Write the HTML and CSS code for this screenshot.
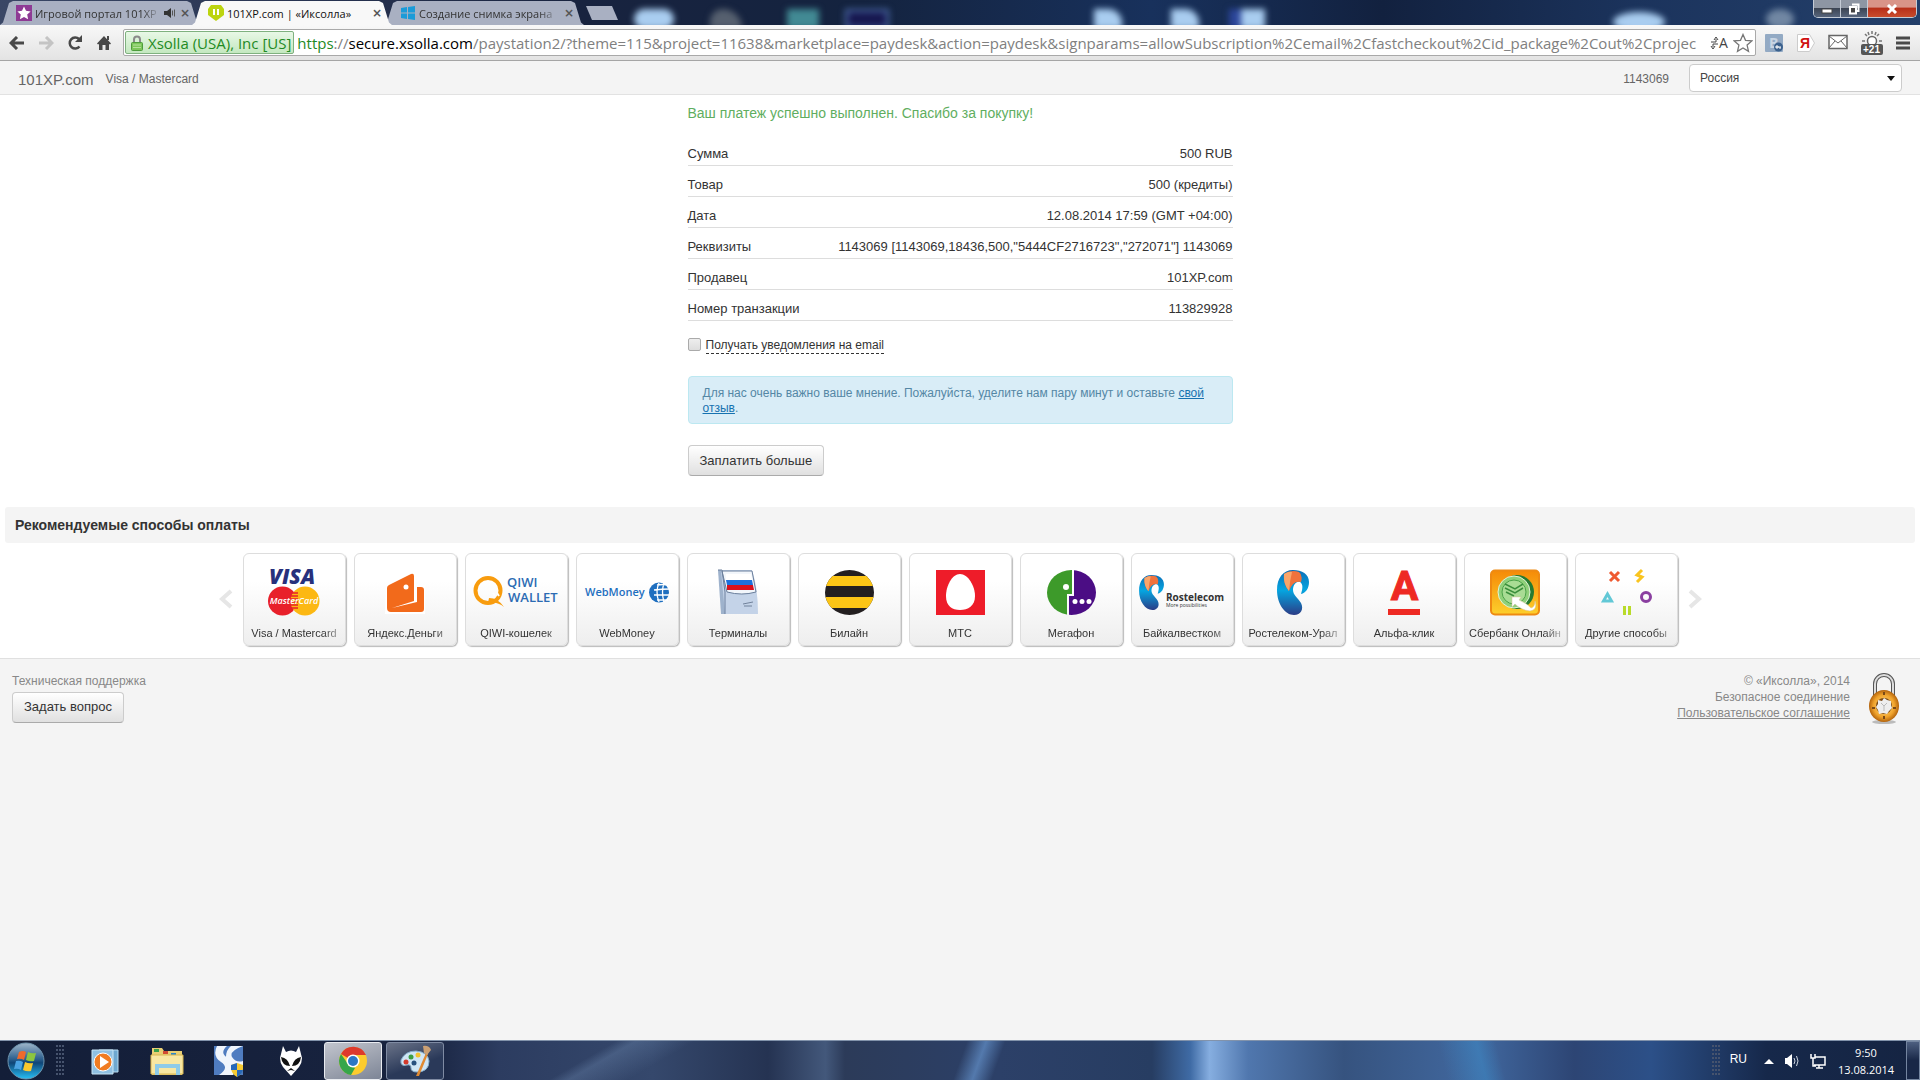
FILE: index.html
```html
<!DOCTYPE html>
<html lang="ru">
  <head>
    <meta charset="utf-8">
    <title>101XP.com | «Иксолла»</title>
    <link rel="stylesheet" href="styles.css">
  </head>
  <body>
    <div class="tabstrip">
      <div class="wallpaper">
        <span class="blob b1"></span><span class="blob b2"></span><span class="blob b3"></span>
        <span class="blob b4"></span><span class="blob b5"></span><span class="blob b6"></span>
        <span class="blob b7"></span><span class="blob b8"></span><span class="blob b9"></span>
      </div>
      <div class="tabs">
        <div class="tab">
          <svg width="16" height="16" viewBox="0 0 16 16"><rect width="16" height="16" fill="#8e3a94"/><path d="M8 1.5l2 4.3 4.6.6-3.4 3.2.9 4.7L8 12l-4.100 2.300.9-4.700L1.400 6.400 6 5.800z" fill="#fff"/></svg>
          <span class="tab-title">Игровой портал 101XP</span>
          <svg width="12" height="12" viewBox="0 0 12 12"><path d="M0 4h3l4-3v10L3 8H0z" fill="#333"/><path d="M8.500 3.500v5M10.500 2.500v7" stroke="#555" fill="none"/></svg>
          <button class="tab-close" aria-label="Закрыть">×</button>
        </div>
        <div class="tab active">
          <svg width="16" height="16" viewBox="0 0 16 16"><path d="M3 0h10l3 4v6l-8 6-8-6V4z" fill="#bcd40f"/><path d="M6 4v6M10 4v6" stroke="#fff" stroke-width="2"/></svg>
          <span class="tab-title">101XP.com | «Иксолла»</span>
          <button class="tab-close" aria-label="Закрыть">×</button>
        </div>
        <div class="tab">
          <svg width="16" height="16" viewBox="0 0 16 16"><path d="M1 3l6-1v5.500H1zM8 2l7-1v6.500H8zM1 8.500h6V14l-6-1zM8 8.500h7V15l-7-1z" fill="#1b9bd8"/></svg>
          <span class="tab-title">Создание снимка экрана</span>
          <button class="tab-close" aria-label="Закрыть">×</button>
        </div>
        <button class="new-tab" aria-label="Новая вкладка"></button>
      </div>
      <div class="window-buttons">
        <button class="win-min" aria-label="Свернуть"><svg width="12" height="10" viewBox="0 0 12 10"><rect x="1" y="5" width="10" height="4" fill="#fff" stroke="#444"/></svg></button>
        <button class="win-max" aria-label="Восстановить"><svg width="12" height="12" viewBox="0 0 12 12"><path d="M4 1.500h6.500V8H8" fill="none" stroke="#fff" stroke-width="2"/><rect x="2" y="4" width="6" height="6.500" fill="#444" stroke="#fff" stroke-width="2"/></svg></button>
        <button class="win-close" aria-label="Закрыть окно"><svg width="12" height="10" viewBox="0 0 12 10"><path d="M2 1l8 8M10 1L2 9" stroke="#fff" stroke-width="3"/></svg></button>
      </div>
    </div>

    <div class="toolbar">
      <div class="nav">
        <button aria-label="Назад"><svg width="16" height="14" viewBox="0 0 16 14"><path d="M15 7H3M8 1L2 7l6 6" fill="none" stroke="#484848" stroke-width="3"/></svg></button>
        <button aria-label="Вперёд"><svg width="16" height="14" viewBox="0 0 16 14"><path d="M1 7h12M8 1l6 6-6 6" fill="none" stroke="#c4c4c4" stroke-width="3"/></svg></button>
        <button aria-label="Обновить"><svg width="16" height="16" viewBox="0 0 16 16"><path d="M12.500 11.500A5.500 5.500 0 1 1 12 4" fill="none" stroke="#484848" stroke-width="2.500"/><path d="M15 0v7H8z" fill="#484848"/></svg></button>
        <button aria-label="Домой"><svg width="16" height="16" viewBox="0 0 16 16"><path d="M8 1l7 7.500-1 1-1-.500V15H9.500v-5h-3v5H3V9l-1 .500-1-1z" fill="#484848"/><path d="M11 1h2v4h-2z" fill="#484848"/></svg></button>
      </div>
      <div class="omnibox">
        <div class="cert">
          <svg width="12" height="16" viewBox="0 0 12 16"><path d="M3 8V4.500a3 3 0 0 1 6 0V8" fill="none" stroke="#8a8a8a" stroke-width="2"/><rect x=".5" y="7.500" width="11" height="8" rx="1" fill="#7cc65a" stroke="#4d9c3c"/><path d="M2 10h8M2 12.500h8" stroke="#b4e39c"/></svg>
          <span>Xsolla (USA), Inc [US]</span>
        </div>
        <label for="url" class="origin"><span class="scheme">https</span>://<b>secure.xsolla.com</b></label>
        <input type="text" id="url" value="/paystation2/?theme=115&amp;project=11638&amp;marketplace=paydesk&amp;action=paydesk&amp;signparams=allowSubscription%2Cemail%2Cfastcheckout%2Cid_package%2Cout%2Cprojec">
        <svg class="translate" width="20" height="16" viewBox="0 0 20 16"><path d="M1 7h5V4M4 5l2-3 2 3M8 9H3v3M1 11l2 3 2-3" fill="none" stroke="#444"/><text x="9" y="13" font-family="Open Sans" font-size="14" fill="#444">A</text></svg>
        <svg width="20" height="20" viewBox="0 0 20 20"><path d="M10 1.500l2.500 5.800 6.300.600-4.700 4.200 1.400 6.200L10 15l-5.500 3.300 1.400-6.200L1.200 7.900l6.300-.600z" fill="#fff" stroke="#777" stroke-width="1.300"/></svg>
      </div>
      <div class="extensions">
        <svg width="20" height="20" viewBox="0 0 20 20"><rect x="1" y="1" width="18" height="18" rx="1" fill="#93aac4"/><text x="5" y="15" font-family="Open Sans" font-size="14" font-weight="700" fill="#c9d6e4">B</text><circle cx="14.500" cy="14" r="4.500" fill="#3c628e"/><path d="M12 14h5M16 14v2" stroke="#fff"/><circle cx="13" cy="14" r="1.200" fill="none" stroke="#fff"/></svg>
        <svg width="20" height="20" viewBox="0 0 20 20"><path d="M1.500 1.500h12l5 8.500-5 8.500h-12z" fill="#fff" stroke="#ccc"/><text x="4" y="15" font-family="Liberation Sans" font-weight="700" font-size="14" fill="#d01010">Я</text></svg>
        <svg width="20" height="20" viewBox="0 0 20 20"><rect x="1" y="2.500" width="18" height="13" fill="#fff" stroke="#666" stroke-width="1.500"/><path d="M1 3l9 7 9-7M1 15l6-7M19 15l-6-7" fill="none" stroke="#666"/></svg>
        <svg width="24" height="26" viewBox="0 0 24 26"><circle cx="12" cy="11" r="4.500" fill="#fff" stroke="#666" stroke-width="1.500"/><path d="M12 1v3M2 11h3M19 11h3M5 4l2 2M19 4l-2 2M8 2l1 3M16 2l-1 3" stroke="#777" stroke-width="1.500"/><rect x="1" y="14" width="22" height="11" rx="2" fill="#555"/><text x="3" y="23" font-family="Liberation Sans" font-weight="700" font-size="10" fill="#fff">+21</text></svg>
        <button aria-label="Меню"><svg width="14" height="14" viewBox="0 0 14 14"><path d="M0 2h14M0 7h14M0 12h14" stroke="#4a4a4a" stroke-width="3"/></svg></button>
      </div>
    </div>

    <header class="page-header">
      <span class="project">101XP.com</span>
      <span class="method">Visa / Mastercard</span>
      <span class="user-id">1143069</span>
      <div class="country">
        <select aria-label="Страна"><option>Россия</option></select>
      </div>
    </header>

    <main class="content">
      <section class="receipt">
        <h1>Ваш платеж успешно выполнен. Спасибо за покупку!</h1>
        <table>
          <tr><th>Сумма</th><td>500 RUB</td></tr>
          <tr><th>Товар</th><td>500 (кредиты)</td></tr>
          <tr><th>Дата</th><td>12.08.2014 17:59 (GMT +04:00)</td></tr>
          <tr><th>Реквизиты</th><td>1143069 [1143069,18436,500,"5444CF2716723","272071"] 1143069</td></tr>
          <tr><th>Продавец</th><td>101XP.com</td></tr>
          <tr><th>Номер транзакции</th><td>113829928</td></tr>
        </table>
        <div class="notify">
          <input type="checkbox" id="notify">
          <label for="notify">Получать уведомления на email</label>
        </div>
        <p class="alert">Для нас очень важно ваше мнение. Пожалуйста, уделите нам пару минут и оставьте <a href="#">свой отзыв</a>.</p>
        <button class="btn">Заплатить больше</button>
      </section>

      <h2 class="section-title">Рекомендуемые способы оплаты</h2>
      <div class="carousel">
        <button class="arrow" aria-label="Предыдущие"><svg width="14" height="20" viewBox="0 0 14 20"><path d="M12 2l-9 8 9 8" fill="none" stroke="#e6e6e6" stroke-width="4"/></svg></button>
        <a class="card" href="#">
          <svg viewBox="0 0 101 71"><text x="25" y="30" font-family="Open Sans" font-size="21" font-weight="800" font-style="italic" fill="#27307c">VISA</text><circle cx="38.500" cy="47" r="14.500" fill="#e8202a"/><circle cx="61" cy="47" r="14.500" fill="#fcb813"/><path d="M46 39h8M46 42h8M46 45h8M46 48h8M46 51h8M46 54h8" stroke="#e8202a" stroke-width="1.500"/><text x="50" y="50" text-anchor="middle" font-family="Open Sans" font-size="9" font-weight="600" font-style="italic" fill="#fff">MasterCard</text></svg>
          <span>Visa / Mastercard</span>
        </a>
        <a class="card" href="#">
          <svg viewBox="0 0 101 71"><path d="M31 32l28-14 2 13h9v29H30z" fill="#fff"/><path d="M62 33h4q3 0 3 3v19q0 3-3 3H36q-4 0-4-4V34q0-2 2-3l22-11q3-1 3 2v25L37 54l25-6z" fill="#f26a1b"/><circle cx="51" cy="33" r="2.500" fill="#fff"/></svg>
          <span>Яндекс.Деньги</span>
        </a>
        <a class="card" href="#">
          <svg viewBox="0 0 101 71"><circle cx="22" cy="36.500" r="12.500" fill="none" stroke="#f89c0e" stroke-width="4"/><path d="M23 44q9 0 15 9-7-6-16-4z" fill="#f89c0e"/><path d="M27 39l2 3M31 39l2 3" stroke="#fff" stroke-width="2"/><text x="41" y="33" font-family="Open Sans" font-size="13" font-weight="600" fill="#2c6bb3">QIWI</text><text x="42" y="48" font-family="Open Sans" font-size="13" font-weight="600" fill="#2c6bb3">WALLET</text></svg>
          <span>QIWI-кошелек</span>
        </a>
        <a class="card" href="#">
          <svg viewBox="0 0 101 71"><text x="8" y="42" font-family="Open Sans" font-size="11" font-weight="600" fill="#1f6fbf">WebMoney</text><circle cx="82" cy="38.500" r="10" fill="#1f6fbf"/><path d="M80 31q5-1 12 0M77 36q8-1 16-1M77 41q8 0 16 0M80 46q6 0 11 0M82 29q-4 9 0 19M87 29q-3 9 0 19" fill="none" stroke="#fff" stroke-width="1.300"/></svg>
          <span>WebMoney</span>
        </a>
        <a class="card" href="#">
          <svg viewBox="0 0 101 71"><path d="M30 16h4l4 22v22h-5z" fill="#9eb2cc"/><path d="M33 16h31q6 18 6 44H37z" fill="#c4d3e8"/><path d="M34 17h30l4 21q-14 4-29 0z" fill="#f2f6fb" stroke="#6b7f9c"/><path d="M38 20h25l1 6H38z" fill="#fff"/><path d="M38 26h26l1 5H39z" fill="#1c70dc"/><path d="M39 31h26l1 5H39z" fill="#d9101c"/><path d="M55 50l10-2M56 52h8" stroke="#71829b"/><path d="M30 16h4l3 22v22" fill="none" stroke="#6b7f9c"/></svg>
          <span>Терминалы</span>
        </a>
        <a class="card" href="#">
          <svg viewBox="0 0 101 71"><defs><clipPath id="ball"><ellipse cx="50.500" cy="38.500" rx="24.500" ry="22.500"/></clipPath></defs><g clip-path="url(#ball)"><path d="M20 10h60v60H20z" fill="#231f20"/><path d="M20 22h60v10H20zM20 43h60v11H20z" fill="#fcc516"/></g></svg>
          <span>Билайн</span>
        </a>
        <a class="card" href="#">
          <svg viewBox="0 0 101 71"><path d="M26 16h49v45H26z" fill="#ee1c29"/><path d="M50 20c8 0 15 12 15 22s-7 14-15 14-14-4-14-14 6-22 14-22z" fill="#fff"/></svg>
          <span>МТС</span>
        </a>
        <a class="card" href="#">
          <svg viewBox="0 0 101 71"><g clip-path="url(#ball)"><path d="M20 10h31v30h-5v30H20z" fill="#3d9a2a"/><path d="M53 10h30v60H48V42h5z" fill="#4b0d84"/></g><circle cx="45" cy="33" r="3" fill="#fff"/><circle cx="54" cy="47.500" r="2.500" fill="#fff"/><circle cx="61" cy="47.500" r="2.500" fill="#fff"/><circle cx="68" cy="47.500" r="2.500" fill="#fff"/></svg>
          <span>Мегафон</span>
        </a>
        <a class="card" href="#">
          <svg viewBox="0 0 101 71"><defs>
            <linearGradient id="ear" x1="0" y1="0" x2="0" y2="1"><stop offset="0" stop-color="#0b6fb8"/><stop offset=".45" stop-color="#05a5e0"/><stop offset="1" stop-color="#2b3c86"/></linearGradient>
            <symbol id="rt" viewBox="0 0 32 45"><path d="M16 0C6 0 0 8 0 20c0 14 8 25 17 25 7 0 10-6 7-12-3-5-8-8-8-13 0-6 4-9 7-8 3 2 3 6 1 12 5-1 8-6 8-12C32 4 25 0 16 0z" fill="url(#ear)"/><path d="M7 4Q14-1 22 2q4 3 2 10-8-2-12 9Q6 14 7 4z" fill="#f0723c"/><path d="M7 4q5-3 8-2-2 8-3 19Q6 14 7 4z" fill="#f9a56a"/></symbol></defs>
            <use href="#rt" x="7" y="21" width="25" height="35"/><text x="34" y="47" font-family="Open Sans" font-size="10" font-weight="700" fill="#333">Rostelecom</text><text x="34" y="53" font-family="Open Sans" font-size="5" fill="#333">More possibilities</text></svg>
          <span>Байкалвестком</span>
        </a>
        <a class="card" href="#">
          <svg viewBox="0 0 101 71"><use href="#rt" x="34" y="16" width="32" height="45"/></svg>
          <span>Ростелеком-Урал</span>
        </a>
        <a class="card" href="#">
          <svg viewBox="0 0 101 71"><text x="50.500" y="46" text-anchor="middle" font-family="Roboto" font-size="41" font-weight="700" fill="#ee2a23" stroke="#ee2a23">А</text><path d="M34 55h32v6H34z" fill="#ee2a23"/></svg>
          <span>Альфа-клик</span>
        </a>
        <a class="card" href="#">
          <svg viewBox="0 0 101 71"><defs><linearGradient id="gold" x1="0" y1="0" x2="0" y2="1"><stop offset="0" stop-color="#f58a07"/><stop offset="1" stop-color="#fdd02c"/></linearGradient></defs><rect x="26" y="16.500" width="48" height="44" rx="4" fill="url(#gold)" stroke="#ee8a12" stroke-width="2"/><ellipse cx="52" cy="38" rx="17" ry="17" fill="#267a31"/><ellipse cx="49" cy="38" rx="16" ry="16" fill="#8fd07a" stroke="#e2f4d8"/><ellipse cx="49" cy="38" rx="12" ry="12" fill="#a9dc94" stroke="#4da34a"/><path d="M40 30l10 5 8-5M40 34l10 5 8-5M41 38l8 4" fill="none" stroke="#3b8f3c" stroke-width="1.500"/><path d="M47 43h9l-2 3q9 4 12 8 4-1 4-7 3 9-5 10-9-1-15-7l-3 3z" fill="#fff" stroke="#d5c39a" stroke-width=".5"/></svg>
          <span>Сбербанк Онлайн</span>
        </a>
        <a class="card" href="#">
          <svg viewBox="0 0 101 71" fill="none" stroke-width="3"><path d="M34 18l9 9M43 18l-9 9" stroke="#ef5a31"/><path d="M66 16l-5 5 5 2-5 5" stroke="#f9c41f"/><path d="M31.500 40l-4 7h8z" stroke="#62c8d6"/><circle cx="70" cy="43" r="4.500" stroke="#8a3fa0"/><path d="M48.500 52v9M53.500 52v9" stroke="#b9db2a"/></svg>
          <span>Другие способы</span>
        </a>
        <button class="arrow" aria-label="Следующие"><svg width="14" height="20" viewBox="0 0 14 20"><path d="M2 2l9 8-9 8" fill="none" stroke="#e6e6e6" stroke-width="4"/></svg></button>
      </div>
    </main>

    <footer class="page-footer">
      <div class="support">
        <div>Техническая поддержка</div>
        <button class="btn">Задать вопрос</button>
      </div>
      <div class="legal">
        <div>© «Иксолла», 2014</div>
        <div>Безопасное соединение</div>
        <a href="#">Пользовательское соглашение</a>
      </div>
      <svg class="lock" width="32" height="52" viewBox="0 0 32 52"><defs><radialGradient id="brass"><stop offset="0" stop-color="#ffe08a"/><stop offset=".7" stop-color="#f0a32c"/><stop offset="1" stop-color="#b3630c"/></radialGradient></defs><ellipse cx="16" cy="49" rx="12" ry="2" fill="#bbb"/><path d="M7 24V11a9 9 0 0 1 18 0v13" fill="none" stroke="#555" stroke-width="4"/><path d="M7 24V11a9 9 0 0 1 18 0v13" fill="none" stroke="#ddd" stroke-width="2"/><ellipse cx="16" cy="33" rx="15" ry="16" fill="url(#brass)"/><circle cx="16" cy="33" r="8" fill="#7b4a17"/><path d="M16 25l3 2 4 1v4l1 3-3 3-2 3-4-1-4 1-1-4-2-3 2-3v-4l4 1z" fill="#eee"/><path d="M13 30l3 3 3-3M16 33v5" stroke="#bbb" fill="none"/><path d="M15 19h2v3h-2zM15 43h2v3h-2zM4 34h3v2H4zM25 34h3v2h-3z" fill="#7b4a17"/></svg>
    </footer>

    <div class="taskbar">
      <button class="start" aria-label="Пуск"><svg width="38" height="38" viewBox="0 0 38 38"><defs><linearGradient id="orb" x1="0" y1="0" x2="0" y2="1"><stop offset="0" stop-color="#9fb6ca"/><stop offset=".45" stop-color="#2c5f8e"/><stop offset=".55" stop-color="#0f4577"/><stop offset="1" stop-color="#27c0f5"/></linearGradient></defs><circle cx="19" cy="19" r="18" fill="url(#orb)" stroke="#6d93ad"/><path d="M12 10q4-2 7 0l-2 8q-3-2-7-1z" fill="#ee6a2c"/><path d="M21 10q4 2 8 1l-2 8q-4 1-8-1z" fill="#8cc63f"/><path d="M9 19q4-1 7 1l-2 8q-3-2-7-1z" fill="#4ba3e3"/><path d="M18 20q4 2 8 1l-2 8q-4 1-8-1z" fill="#fbc92e"/></svg></button>
      <span class="grip"></span>
      <button class="task" aria-label="Проигрыватель"><svg width="28" height="28" viewBox="0 0 28 28"><path d="M8 3h19v22H8z" fill="#6fa8cf" stroke="#b9dcf0"/><path d="M1 3h21v24H1z" fill="#8fc0e2" stroke="#c9e6f6"/><circle cx="12" cy="15" r="9" fill="#f07c22" stroke="#fff"/><path d="M9 9l9 6-9 6z" fill="#fff"/></svg></button>
      <button class="task" aria-label="Проводник"><svg width="34" height="30" viewBox="0 0 34 30"><path d="M2 2h10l2 3h18v24H2z" fill="#e9cf74"/><path d="M4 3h5v3H4z" fill="#38a14a"/><path d="M13 5h5v3h-5z" fill="#d24a32"/><path d="M21 7h5v3h-5z" fill="#2b86c9"/><path d="M1 9h32v19H1z" fill="#f8e7a2" stroke="#d8b653"/><path d="M7 29V20h21v9" fill="none" stroke="#8ecbe8" stroke-width="4"/></svg></button>
      <button class="task" aria-label="Программа"><svg width="30" height="32" viewBox="0 0 30 32"><path d="M0 1h29v29H0z" fill="#4f7cc0"/><path d="M3 1h10Q5 8 14 13q8 5 5 17H5q11-7 2-13T3 1zM17 1h12Q15 6 18 12q4 6 11 4v6Q12 22 12 12 12 5 17 1z" fill="#f0f5fc"/><path d="M17 20l6-2 6 2q1 8-6 12-7-4-6-12z" fill="#f6ca32"/><path d="M23 18l-6 2v5h6zM23 25h6q-1 4-6 7z" fill="#2568bb"/></svg></button>
      <button class="task" aria-label="foobar2000"><svg width="24" height="32" viewBox="0 0 24 32"><path d="M4 1l3 6q5-3 10 0l3-6 3 12q0 5-3 9l-8 9-8-9q-3-4-3-9z" fill="#fff"/><path d="M2 12q7 1 9 9-8 0-9-9zM22 12q-7 1-9 9 8 0 9-9zM8 26l4-3 4 3-4-1z" fill="#111"/></svg></button>
      <button class="task running current" aria-label="Chrome"><svg width="30" height="30" viewBox="0 0 30 30"><circle cx="15" cy="15" r="14" fill="#fccc2e"/><path d="M15 15L3 8a14 14 0 0 1 25 1H15z" fill="#dd3a2c"/><path d="M3 8l7 10 7 4-4 7A14 14 0 0 1 3 8z" fill="#36a64a"/><circle cx="15" cy="15" r="6.500" fill="#fff"/><circle cx="15" cy="15" r="5" fill="#2d77c4"/></svg></button>
      <button class="task running" aria-label="Paint"><svg width="32" height="32" viewBox="0 0 32 32"><path d="M2 15Q6 6 17 6q12 1 13 10 0 11-12 11-6 0-6-4 0-4-4-3-7 2-6-5z" fill="#cfe5f5" stroke="#86aecb"/><circle cx="7" cy="17" r="2.500" fill="#d33b2d"/><circle cx="12" cy="12" r="2.500" fill="#3b9e42"/><circle cx="19" cy="10" r="2.500" fill="#f2c32f"/><circle cx="15" cy="18" r="2.500" fill="#27507e"/><path d="M17 31L27 8l2 1-9 22z" fill="#e08a32"/><path d="M24 1q6-1 8 4l-4 5-3-2z" fill="#cba074"/></svg></button>
      <div class="tray">
        <span class="grip"></span>
        <span class="lang">RU</span>
        <svg width="10" height="6" viewBox="0 0 10 6"><path d="M0 6l5-5 5 5z" fill="#fff"/></svg>
        <svg width="16" height="14" viewBox="0 0 16 14"><path d="M1 4h2l5-4v14L3 10H1z" fill="#fff"/><path d="M10 4q2 3 0 6M12.500 2q3 5 0 10" fill="none" stroke="#cfd6e0"/></svg>
        <svg width="16" height="16" viewBox="0 0 16 16"><path d="M5 4h10v8H4M9 12v3M6 15h7M1 1v4h4V1M3 5v8h3" fill="none" stroke="#fff" stroke-width="1.500"/></svg>
        <time class="clock">9:50<br>13.08.2014</time>
        <button class="show-desktop" aria-label="Свернуть все окна"></button>
      </div>
    </div>
  </body>
</html>
```
FILE: styles.css
```css
* {
  box-sizing: border-box;
}
body {
  margin: 0;
  min-height: 100vh;
  display: flex;
  flex-direction: column;
  background: #f4f4f4;
  color: #333;
  font-family: "Liberation Sans", Arial, sans-serif;
  font-size: 12px;
}
button {
  padding: 0;
  border: none;
  background: none;
  font: inherit;
  color: inherit;
}
svg {
  display: block;
  flex: none;
}

/* browser window */
.tabstrip {
  position: relative;
  display: flex;
  justify-content: space-between;
  height: 25px;
  background: linear-gradient(90deg, #3a4766 0%, #18233f 30%, #14233f 45%, #18315c 60%, #12213f 72%, #1b335c 85%, #24406b 100%);
}
.wallpaper {
  position: absolute;
  inset: 0;
  overflow: hidden;
}
.blob {
  position: absolute;
  top: 9px;
  width: 32px;
  height: 20px;
  filter: blur(3px);
  background: #a9cdf0;
}
.b1 { left: 33%; width: 40px; border-radius: 10px; }
.b2 { left: 37%; background: #56606f; border-radius: 20px 30px 0 0; }
.b3 { left: 41%; background: #428a94; }
.b4 { left: 44%; width: 44px; background: #16174f; border: 3px solid #4a6ba5; }
.b5 { left: 57%; width: 28px; border-radius: 0 14px 0 0; }
.b6 { left: 61%; width: 28px; border-radius: 0 14px 0 0; }
.b7 { left: 64%; width: 36px; border-left: 12px solid #2c469a; }
.b8 { left: 84%; width: 52px; top: 12px; border-radius: 50%; }
.b9 { left: 92%; width: 28px; border-radius: 50%; background: #7187a3; }
.tabs {
  position: relative;
  display: flex;
  padding: 1px 0 0;
}
.tab {
  display: flex;
  align-items: center;
  gap: 3px;
  width: 200px;
  height: 24px;
  margin-right: -8px;
  padding: 0 9px 0 16px;
  background: #a9b0c2;
  clip-path: polygon(0 100%, 3px 90%, 9px 8%, 13px 0, 187px 0, 191px 8%, 197px 90%, 100% 100%);
  color: #333;
  font-family: "Open Sans", sans-serif;
  font-size: 11px;
}
.tab.active {
  background: #f8f8f8;
  color: #111;
  z-index: 1;
}
.tab-title {
  flex: 1;
  overflow: hidden;
  white-space: nowrap;
  mask-image: linear-gradient(90deg, #000 85%, transparent);
}
.tab.active .tab-title {
  mask-image: none;
}
.tab-close {
  width: 12px;
  font-size: 16px;
  line-height: 16px;
  font-weight: 600;
  color: #555;
}
.new-tab {
  width: 32px;
  height: 14px;
  margin: 5px 0 0 10px;
  background: #a9b0c2;
  clip-path: polygon(0 0, 26px 0, 100% 100%, 6px 100%);
}
.window-buttons {
  position: relative;
  display: flex;
  height: 18px;
  margin-right: 3px;
  border: 1px solid #c5ccd6;
  border-top: none;
  border-radius: 0 0 5px 5px;
  overflow: hidden;
}
.window-buttons button {
  display: flex;
  align-items: center;
  justify-content: center;
  width: 27px;
  background: linear-gradient(#8e96a3 0 45%, #3c4554 50%, #57657c);
  border-right: 1px solid #c5ccd6;
}
.window-buttons .win-close {
  width: 48px;
  border: none;
  background: linear-gradient(#d99488 0 40%, #b8301a 50%, #c94c2c);
}
.toolbar {
  display: flex;
  align-items: center;
  height: 36px;
  padding: 0 10px 0 9px;
  background: linear-gradient(#f8f8f8, #e3e3e3);
  border-bottom: 1px solid #a5a5a5;
}
.nav {
  display: flex;
  align-items: center;
  gap: 13px;
  margin-right: 11px;
}
.omnibox {
  flex: 1;
  display: flex;
  align-items: center;
  min-width: 0;
  height: 27px;
  padding: 0 2px 0 1px;
  background: #fff;
  border: 1px solid #a9a9a9;
  border-radius: 2px;
  font-family: "Open Sans", sans-serif;
  font-size: 15px;
  color: #808080;
}
.cert {
  display: flex;
  align-items: center;
  gap: 5px;
  height: 23px;
  padding: 0 2px 0 5px;
  margin-right: 3px;
  border: 1px solid #7fb17f;
  border-radius: 2px;
  background: linear-gradient(#e8f8e6, #c4e8c0);
  color: #1f8a24;
  white-space: nowrap;
}
.origin b {
  color: #000;
  font-weight: 400;
}
.scheme {
  color: #1f8a24;
}
.omnibox input {
  flex: 1;
  min-width: 0;
  padding: 0;
  border: none;
  outline: none;
  background: none;
  font: inherit;
  color: inherit;
}
.translate {
  margin: 0 3px;
}
.extensions {
  display: flex;
  align-items: center;
  gap: 12px;
  margin-left: 8px;
}

/* payment page */
.page-header {
  display: flex;
  align-items: center;
  height: 34px;
  padding: 0 18px;
  background: #f4f4f4;
  border-bottom: 1px solid #e2e2e2;
  color: #666;
}
.page-header span {
  padding-top: 3px;
}
.project {
  font-size: 15px;
}
.method {
  flex: 1;
  margin-left: 12px;
}
.user-id {
  margin-right: 20px;
}
.country {
  position: relative;
  width: 213px;
}
.country select {
  width: 100%;
  height: 28px;
  padding: 0 10px;
  appearance: none;
  background: #fff;
  border: 1px solid #ccc;
  border-radius: 4px;
  color: #444;
  font: inherit;
}
.country::after {
  content: "";
  position: absolute;
  top: 12px;
  right: 7px;
  border: 4px solid transparent;
  border-top: 5px solid #111;
  border-bottom: none;
}
.content {
  background: #fff;
  border-bottom: 1px solid #e0e0e0;
  padding: 0 5px 12px;
}
.receipt {
  width: 545px;
  margin: 0 auto;
  padding: 8px 0 31px;
}
.receipt h1 {
  margin: 0 0 22px;
  color: #5fae5f;
  font-size: 14px;
  font-weight: 400;
  line-height: 20px;
}
.receipt table {
  width: 100%;
  border-collapse: collapse;
  font-size: 13px;
}
.receipt th,
.receipt td {
  height: 31px;
  padding: 0 0 3px;
  border-bottom: 1px solid #ddd;
  line-height: 16px;
  vertical-align: bottom;
}
.receipt tr:first-child th,
.receipt tr:first-child td {
  height: 20px;
}
.receipt th {
  text-align: left;
  font-weight: 400;
}
.receipt td {
  text-align: right;
}
.notify {
  display: flex;
  align-items: center;
  gap: 5px;
  margin: 17px 0 21px;
}
.notify input {
  appearance: none;
  width: 13px;
  height: 13px;
  margin: 0 0 4px;
  border: 1px solid #aaa;
  border-radius: 2px;
  background: linear-gradient(#eee, #ddd);
}
.notify label {
  border-bottom: 1px dashed #333;
  line-height: 15px;
}
.alert {
  margin: 0 0 21px;
  padding: 9px 14px 7px;
  background: #d9edf7;
  border: 1px solid #bce8f1;
  border-radius: 4px;
  color: #5487a5;
  line-height: 15px;
}
.alert a {
  color: #1672b0;
}
.btn {
  height: 31px;
  padding: 0 11px;
  border: 1px solid #ccc;
  border-bottom-color: #aaa;
  border-radius: 4px;
  background: linear-gradient(#fff, #e0e0e0);
  color: #333;
  font-size: 13px;
}
.section-title {
  margin: 0 0 10px;
  padding: 0 10px;
  background: #f4f4f4;
  border-radius: 3px;
  font-size: 14px;
  line-height: 36px;
}
.carousel {
  display: flex;
  align-items: center;
  justify-content: center;
  gap: 8px;
}
.arrow {
  margin: 0 2px;
}
.card {
  width: 103px;
  height: 93px;
  border: 1px solid #ddd;
  border-radius: 6px;
  box-shadow: 1px 1px 1px #bbb;
  background: linear-gradient(#fff 30%, #eee);
  color: #333;
  font-size: 11px;
  line-height: 16px;
  text-align: center;
  text-decoration: none;
}
.card span {
  display: block;
  margin: 0 4px;
  overflow: hidden;
  white-space: nowrap;
  mask-image: linear-gradient(90deg, #000 80%, rgba(0, 0, 0, .3));
}
.page-footer {
  flex: 1;
  display: flex;
  align-items: flex-start;
  padding: 14px 20px 0 12px;
  color: #888;
  line-height: 16px;
}
.support {
  flex: 1;
}
.support .btn {
  margin-top: 3px;
}
.legal {
  margin-right: 18px;
  text-align: right;
}
.legal a {
  color: inherit;
}

/* desktop taskbar */
.taskbar {
  display: flex;
  align-items: center;
  height: 40px;
  padding-left: 7px;
  border-top: 1px solid #8293ab;
  background:
    linear-gradient(150deg, transparent 31%, rgba(120, 150, 190, .3) 32%, transparent 35%),
    linear-gradient(110deg, transparent 50%, rgba(110, 160, 220, .6) 51%, transparent 52%),
    linear-gradient(75deg, transparent 75%, rgba(60, 140, 200, .5) 77%, transparent 78%),
    linear-gradient(90deg, #131e38 0%, #18233f 22%, #2c3c60 26%, #35486c 34%, #253352 40%, #43587b 43%, #2c3b59 44%, #2c4068 52%, #273d62 60%, #3f6ba5 62%, #86aee0 63%, #5077ae 65%, #36537f 70%, #41689f 77%, #2d4574 82%, #2c5088 86%, #16284a 92%, #152442 100%);
  color: #fff;
}
.grip {
  width: 9px;
  height: 32px;
  margin: 0 11px;
  background: radial-gradient(circle at 1px 1px, #46536d 1px, transparent 1px) 0 0 / 3px 4px;
}
.task {
  display: flex;
  align-items: center;
  justify-content: center;
  width: 58px;
  height: 38px;
  margin-right: 4px;
}
.task.running {
  border: 1px solid #7f8ba3;
  border-radius: 3px;
  background: linear-gradient(160deg, #6a7388, #2a3959 60%);
}
.task.current {
  border-color: #e8ebf0;
  background: linear-gradient(160deg, #c2c5cd, #7d8596);
}
.tray {
  display: flex;
  align-items: center;
  align-self: stretch;
  margin-left: auto;
}
.tray svg {
  margin-left: 10px;
}
.tray .grip {
  margin-right: 9px;
}
.lang {
  margin: 0 7px 4px 0;
}
.clock {
  width: 80px;
  font-family: "Open Sans", sans-serif;
  font-size: 11px;
  line-height: 17px;
  text-align: center;
}
.show-desktop {
  width: 14px;
  align-self: stretch;
  border: 1px solid #7485a0;
  background: linear-gradient(#4d5f80, #182747 50%);
}
```
